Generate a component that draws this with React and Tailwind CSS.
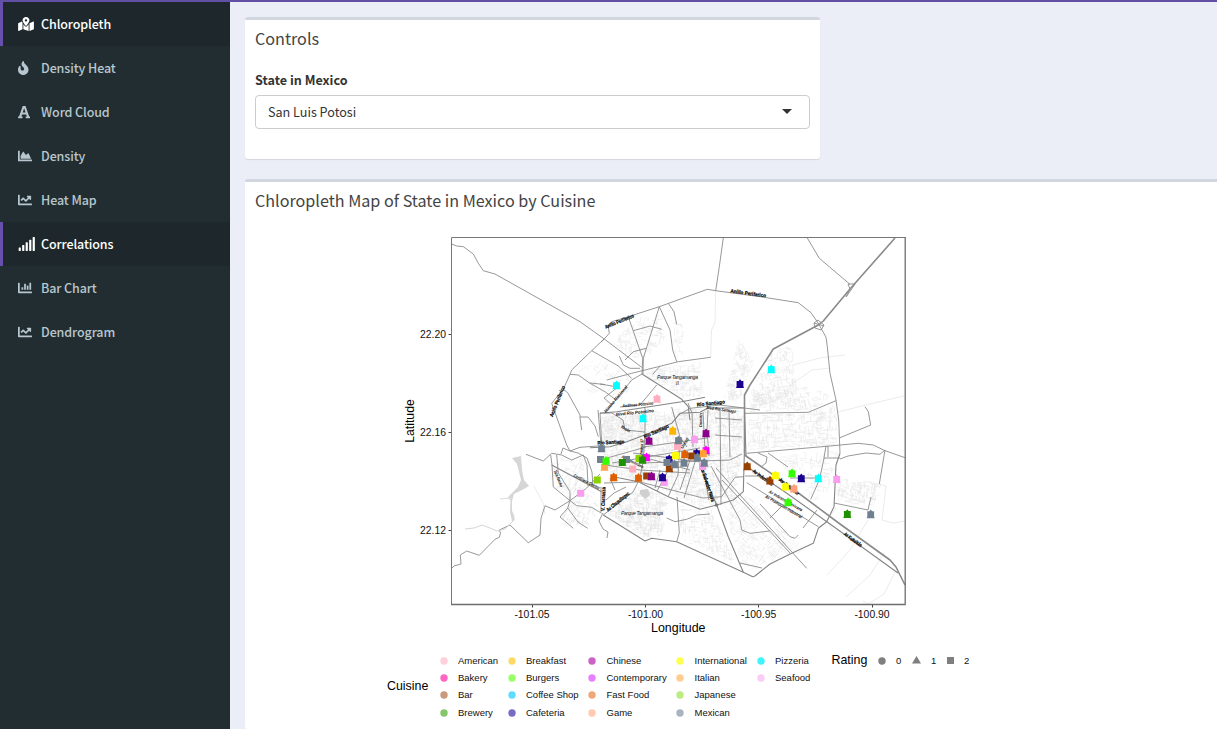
import React from "react";
import {
  FaMapMarkedAlt,
  FaFire,
  FaChartArea,
  FaChartLine,
  FaSignal,
  FaChartBar,
} from "react-icons/fa";

function SerifA({ className }) {
  return (
    <svg viewBox="0 0 448 512" className={className} fill="currentColor">
      <path d="M432 416h-23L278 42c-3-6-8-10-15-10h-78c-7 0-12 4-15 10L39 416H16c-9 0-16 7-16 16v32c0 9 7 16 16 16h136c9 0 16-7 16-16v-32c0-9-7-16-16-16h-27l23-70h152l23 70h-27c-9 0-16 7-16 16v32c0 9 7 16 16 16h136c9 0 16-7 16-16v-32c0-9-7-16-16-16zM172 276l52-158 52 158z" />
    </svg>
  );
}

const menu = [
  { label: "Chloropleth", Icon: FaMapMarkedAlt, size: "w-4 h-3.5", active: true },
  { label: "Density Heat", Icon: FaFire, size: "w-[10.5px] h-3.5" },
  { label: "Word Cloud", Icon: SerifA, size: "w-[12.25px] h-3.5" },
  { label: "Density", Icon: FaChartArea, size: "w-3.5 h-3.5" },
  { label: "Heat Map", Icon: FaChartLine, size: "w-3.5 h-3.5" },
  { label: "Correlations", Icon: FaSignal, size: "w-[17.5px] h-3.5", active: true },
  { label: "Bar Chart", Icon: FaChartBar, size: "w-3.5 h-3.5" },
  { label: "Dendrogram", Icon: FaChartLine, size: "w-3.5 h-3.5" },
];

function Sidebar() {
  return (
    <nav className="w-[230px] shrink-0 bg-[#222d32]">
      {menu.map(({ label, Icon, size, active }) => (
        <a
          key={label}
          className={
            active
              ? "flex h-11 items-center border-l-[3px] border-[#6650ac] bg-[#1e282c] pl-[15px] text-white"
              : "flex h-11 items-center border-l-[3px] border-transparent pl-[15px] text-[#b8c7ce]"
          }
        >
          <span className="flex w-[23px] items-center">
            <Icon className={size} />
          </span>
          <span className="text-[12.5px] font-medium leading-5 tracking-[-0.1px]">{label}</span>
        </a>
      ))}
    </nav>
  );
}

/* Deterministic short street segments scattered through a polygon. */
function streets(seed, poly, count, tilt) {
  let s = seed;
  const rnd = () => {
    s = (s * 16807) % 2147483647;
    return s / 2147483647;
  };
  const xs = poly.map((p) => p[0]);
  const ys = poly.map((p) => p[1]);
  const x0 = Math.min(...xs), x1 = Math.max(...xs);
  const y0 = Math.min(...ys), y1 = Math.max(...ys);
  const inside = (x, y) => {
    let r = false;
    for (let i = 0, j = poly.length - 1; i < poly.length; j = i++) {
      const [a, b] = poly[i];
      const [c, d] = poly[j];
      if (b > y !== d > y && x < ((c - a) * (y - b)) / (d - b) + a) r = !r;
    }
    return r;
  };
  let out = "";
  for (let i = 0; i < count; i++) {
    const x = x0 + rnd() * (x1 - x0);
    const y = y0 + rnd() * (y1 - y0);
    const a = ((tilt + (rnd() > 0.5 ? 90 : 0) + (rnd() - 0.5) * 8) * Math.PI) / 180;
    const l = 1.5 + rnd() * 5.5;
    const ex = x + Math.cos(a) * l;
    const ey = y + Math.sin(a) * l;
    if (inside(x, y) && inside(ex, ey))
      out += `M${x.toFixed(1)} ${y.toFixed(1)}L${ex.toFixed(1)} ${ey.toFixed(1)}`;
  }
  return out;
}

const districts = [
  streets(11, [[602, 415], [690, 408], [744, 410], [744, 455], [735, 500], [700, 508], [640, 482], [600, 470]], 2600, -8),
  streets(23, [[635, 318], [662, 312], [666, 340], [645, 360], [618, 362], [612, 342]], 260, 10),
  streets(31, [[592, 352], [618, 366], [640, 380], [606, 412], [598, 400], [575, 378]], 200, 35),
  streets(37, [[640, 375], [660, 366], [700, 362], [705, 396], [684, 400]], 420, 0),
  streets(41, [[740, 332], [746, 350], [755, 360], [744, 392], [738, 402], [722, 402], [730, 370]], 420, 70),
  streets(43, [[770, 352], [792, 345], [797, 390], [782, 402], [750, 410], [750, 388]], 360, 78),
  streets(47, [[747, 415], [808, 412], [836, 402], [838, 445], [748, 452]], 620, -4),
  streets(53, [[750, 395], [800, 385], [828, 392], [832, 402], [808, 411], [748, 412]], 300, -10),
  streets(59, [[768, 455], [838, 450], [836, 478], [815, 510], [798, 478]], 300, 5),
  streets(61, [[553, 458], [585, 458], [590, 485], [600, 494], [600, 510], [588, 528], [560, 525], [568, 498], [548, 482]], 420, 25),
  streets(67, [[606, 514], [640, 485], [670, 498], [662, 536], [645, 539]], 900, 0),
  streets(71, [[680, 505], [712, 508], [726, 538], [740, 568], [680, 540]], 420, 0),
  streets(73, [[720, 506], [744, 490], [806, 552], [770, 562], [755, 572], [742, 565]], 900, 45),
  streets(79, [[836, 478], [882, 482], [876, 506], [836, 502]], 260, 12),
  streets(83, [[672, 322], [684, 320], [682, 358], [674, 360]], 60, 0),
  streets(89, [[600, 415], [645, 410], [643, 445], [602, 445]], 180, 15),
];

const minor = [
  "715.7 290.7 715 323 711.5 330 710.7 357",
  "793 365 820 358 845 355",
  "838 412 870 404 904 396",
  "827 575 850 550 868 520",
  "846 597 870 575 884 553",
  "863 601 868 604 884 594 895 572",
  "836 508 827 520 833 531",
  "879 484 886 486 882 520 893 523 905 521",
  "534 486 543 503 545 514",
  "786 388 812 370 830 368",
];

const roads = [
  "451.7 244 456.7 246 463.3 246.7 473.3 254 478.3 263.3 483.3 270.7 495 274 580 321.7 604.3 339 641.7 367.3",
  "604 339 591.7 350.7 571.7 370 570 374.3 563.3 389.3 551.7 403.3 557.7 420 566.7 445 570 451",
  "563.3 389.3 567.7 392.7 580 415 580 418 581.7 430",
  "580 417 588 417 595 426 598.3 436.7",
  "591.7 350.7 605 358.3 618.3 366 631.7 378.3",
  "570 374.3 578.3 375 590 383.3 605 391.7 616 400",
  "590 383 605 384.5",
  "601.7 341.7 609.3 333.3 608.3 326.7 611.7 321.7 628.3 316.7 659.3 306.7 707.3 289.3 715.7 290.7 760 296.7 798.3 302.7 811 312.7 818.3 323.3 826 337.3 827.3 346.7 830 373.3 836 400 838.7 420 840 453.3",
  "723.3 238 719.3 266.7 715.7 290.7",
  "628.3 316.7 642.7 358.3 642 374",
  "659.3 306.7 643.3 358.3 643 374",
  "659.3 306.7 670 330 672.7 350 676.7 361.7",
  "668.3 303.3 674 311.7 676.7 324.3",
  "633.3 330.7 650 326 661.7 329.3",
  "606.7 380 631.7 373.3 658.3 366.7 678.3 361.7 710.7 357.3",
  "619.3 356 623.3 365 630 368.3 640 368.3",
  "625 360 633.3 351.7 646 348.3",
  "642 374 631.7 380 605 413.3",
  "660 366 653 374",
  "656.7 385 640 405 620 407",
  "600 384 618 387 604 398 612 405",
  "678.3 415 690 408.3 720 405 760 410",
  "807.3 238 819.3 258.3 850 284.3",
  "848 284 855 284 851 290 846 297 850 289 848 284",
  "814 323 818 320 824 325 821 330 815 328 814 323 824 326",
  "745 413.3 808.3 412.3 836 400.7",
  "865 406.7 868.3 411.7 870.7 425 840 437.7",
  "746.7 453.3 830 446 858.3 443.3 873.3 445 885 450.7 905 457.7",
  "840 459 848 456 866 453 880 454.3 885 450",
  "885 450 879.3 484",
  "826 446 823.3 461.7 819.3 480 810.7 499.3",
  "824 458 840 458", "828 446 828 457",
  "768 453 788 467", "758 453 767 457 766 463 761 467",
  "746.7 482.7 818.3 526.7",
  "716 468 740 495 806.7 568.3", "722 480 740 499 790 553",
  "760 504 790 536.7 795 538.3 798.3 535",
  "782 506 770 518", "817 510 803 528", "834 503 868 510 871 497",
  "740 563 762 568", "790 478 818 478", "745 476 758 476",
  "451.7 568.3 454 566 461 564 460.3 555 466.7 551 479.3 555.3 495 539.3 499.3 537.3 500.5 533 499.3 530 510 525 528.3 542.7 540 535 541 518.3 545 505.7 555 510 570 500.7 586.7 488 600 474",
  "526 454.3 543.3 461 551.7 453.3 561.7 455 571.7 460 583.3 455 587 465 588 486",
  "550.7 455 552 465 553.3 487 570 500.7",
  "556.7 455 558.3 473 570 491.7 570 500.7",
  "561 454 563 448 570 451 578 453 587 458 592 472 593 487",
  "570 451 580 447.3 598 446",
  "570 500.7 576.7 505.7 591.7 507.3 601.7 513.3",
  "570 500.7 567.7 508 560 517 573.3 528.3",
  "567.7 508 578 522 587.7 528.3",
  "603 513 599 521 603 529 608 532 607 538",
  "601 487 601 512", "598 410 601 445", "600 413 601.7 443",
  "600 413 612 413 623 420 625 430 645 432",
  "603.3 515 633 492 638.3 481.7",
  "606 500 614 493 626 487",
  "645 408 645 435 643 463 640 477",
  "671.7 407 680 437 687 447", "688 403 692 413 693 447", "703 412 705 450", "708 410 707 430 709 456",
  "643 447 707 438", "600 460 646 447", "612 463 700 448", "633 453 700 462", "605 465 640 470 690 473",
  "643 463 730 460 742 454", "680 437 678 475 668 497", "690 460 680 490", "695 462 684 498",
  "702 462 709 500", "671 465 657 491", "660 470 655 488", "650 459 690 470", "610 478 615 490", "604 483 638 482",
  "715 418 742 420", "715 435 742 437", "729 410 730 457", "720 408 721 505",
  "711 466 740 520 741.7 530 750 533.3 770 531",
  "677 497 677.3 501.7 679.3 533 676.7 541.7",
  "666.7 518 675 521.7 686.7 519.3 696.7 515 710 514",
  "640 482 703 498 721.7 496.7 735 477.3 744 476.7",
];

const main = [
  "603.3 515 645 541 651.7 538.3 676.7 541.7 743.3 572.3 752.7 576.7 755 576 770 564 791.7 553.3 813.3 543.3 818.3 528.3 826.7 521.7 834 506.7 836 465 840 453.3",
  "600 413.3 616.7 411.7 681.7 401.7 705 397.3",
  "642 374 681.7 399.3 688.3 406.7 690 420",
  "590 447.7 610 446.7 626.7 441.7 646.7 434.3 671.7 423.3 680 413.3 700 412.3 708 408 744 408",
  "551.7 465 601.7 491.7",
  "613.3 476.7 638.3 481.7 668.3 496.7 700 509.3 716.7 505 733.3 500 743.3 491.7 744.3 455",
  "716.7 505 728.3 536.7 743.3 572.3",
  "700 466.7 716.7 505",
  "746 466 785 492 830 524 898 573",
  "744.5 410 746 456",
];

const houses = [
  [616.5, 385.5, "#00ffff"], [657, 399, "#ffaebf"], [643, 418.5, "#00ffff"], [672.7, 431, "#ffb400"],
  [649, 441, "#8b008b"], [677.5, 446.5, "#ffaebf", 1], [678.5, 440.5, "#708090"], [694.5, 439.5, "#fa9cf0"],
  [706, 433.5, "#8b008b"], [601.5, 448.5, "#708090"], [604.5, 467, "#ffa54f"], [600.5, 459.5, "#708090", 1],
  [606, 461, "#33ff00"], [597.3, 480, "#8bd000", 1], [613.7, 477.5, "#e06000"], [638.5, 478, "#e06000"],
  [626.5, 459.5, "#708090", 1], [622.3, 462.5, "#1f9000", 1], [632.7, 469, "#ffaebf", 1], [639, 458.5, "#8bd000", 1],
  [646.5, 457.5, "#ff00ff"], [642.5, 460, "#1f9000"], [646.7, 476, "#984000", 1], [651.5, 476.5, "#8b008b"],
  [664.3, 482.5, "#fa9cf0", 1], [662.5, 477.5, "#1c0090"], [669.3, 459.5, "#1c0090"], [669.3, 468.5, "#984000"],
  [667, 462.5, "#708090", 1], [674.5, 464.5, "#708090"], [675.5, 455.5, "#ffff00"], [684, 463, "#708090"],
  [696.7, 453.5, "#1c0090"], [684.7, 454.5, "#e06000"], [691.7, 456, "#984000", 1], [697.5, 457.5, "#708090"],
  [702.5, 466.5, "#fa9cf0", 1], [706, 450.5, "#ff00ff"], [703.3, 453.5, "#ffa030"], [704.3, 463, "#708090"],
  [580.7, 493.3, "#fa9cf0", 1], [740, 384.3, "#1c0090"], [771.3, 369.5, "#00ffff"],
  [747.3, 466.5, "#984000"], [770, 480.8, "#984000"], [775.5, 475.5, "#ffff00"], [785.5, 486.8, "#ffff00"],
  [794, 488.7, "#ffa07a"], [792, 473.5, "#33ff00"], [801.3, 478.5, "#1c0090"], [818.3, 478.5, "#00ffff"],
  [836.7, 479.3, "#fa9cf0"], [788, 502.5, "#33ff00"], [847.3, 514.3, "#1f9000"], [870.7, 514.5, "#708090"],
];

const streetNames = [
  ["Anillo Periferico", 620, 323, -22, 31], ["Anillo Periferico", 748, 295, 8, 36],
  ["Anillo Periferico", 559, 402, -68, 33], ["Río Santiago", 611, 444, -3, 27],
  ["Río Santiago", 657, 433, -24, 27], ["Río Santiago", 711, 405, -6, 28],
  ["Av Kukulkán", 852, 541, 37, 21], ["Av Industrias", 762, 479, 35, 24],
  ["Av Salvador Nava", 706, 485, 72, 36], ["Av Chapultepec", 619, 503, -39, 28],
  ["V. Carranza", 605, 499, -88, 24],
  ["Av Salvador", 788, 488, 38, 24],
];
const thinNames = [
  ["Himno Nacional", 617, 400, -50, 34], ["Anáhuac Potosino", 638, 406, -5, 31],
  ["Blvd Río Potosino", 635, 414, -6, 38], ["Blvd Río Santiago", 721, 411, 8, 30],
  ["Cordillera Central", 586, 483, 27, 29], ["Tata Nacho", 557, 479, 68, 18],
  ["Morales", 625, 430, 30, 10], ["Damián", 702, 420, -90, 14],
  ["Av Venustiano", 632, 463, 27, 24], ["Carretera 57", 643, 449, -86, 20], ["Uresti", 686, 444, -58, 12],
  ["Av Industrial Mexicana", 785, 502, 30, 38], ["Av Promoción Industrial", 783, 508, 30, 42],
];

function MapChart() {
  return (
    <svg viewBox="400 230 512 410" className="h-[410px] w-[512px] shrink-0" fontFamily="'Liberation Sans', Arial, sans-serif">
      <g fill="none" strokeLinejoin="round">
        <path d={districts.join("")} stroke="#e2e2e2" strokeWidth="0.45" />
        {minor.map((p) => <polyline key={p} points={p} stroke="#dedede" strokeWidth="0.6" />)}
        {roads.map((p) => <polyline key={p} points={p} stroke="#858585" strokeWidth="0.85" />)}
        {main.map((p) => <polyline key={p} points={p} stroke="#858585" strokeWidth="1.1" />)}
        <polyline points="895 238 850 289 823.3 321 818.3 325 773.3 349 750 385 744.5 395 744.5 455" stroke="#8a8a8a" strokeWidth="1.6" />
        <polyline points="744.5 455 785 483 840 524 890 560 896 567 905 585" stroke="#8a8a8a" strokeWidth="1.6" />
        <polyline points="513 521 514 516 511 510 511 500 508 498 500 499" stroke="#dcdcdc" strokeWidth="1.2" />
        <polyline points="513 521 505 529 497 531 490 528 482 525 474 528 465 529" stroke="#d0d0d0" strokeWidth="0.9" />
      </g>
      <path d="M512 458 521 456 522 470 524 480 529 486 524 489 514 494 512 501 512 512 515 520 512 521 510 512 511 499 508 497 518 487 521 480 517 464Z" fill="#d6d6d6" />
      <path d="M640 490 648 489 650 495 645 499 640 494Z" fill="#cfcfcf" />
      <circle cx="716.5" cy="505" r="1.8" fill="#777" />
      <g fill="#000" stroke="#000" strokeWidth="0.2" fontSize="5.2" fontWeight="700" textAnchor="middle">
        {streetNames.map(([t, x, y, r, w], i) => (
          <text key={i} transform={`translate(${x} ${y}) rotate(${r})`} textLength={w} lengthAdjust="spacingAndGlyphs">{t}</text>
        ))}
      </g>
      <g fill="#111" fontSize="4.4" fontWeight="700" fontStyle="italic" textAnchor="middle">
        {thinNames.map(([t, x, y, r, w], i) => (
          <text key={i} transform={`translate(${x} ${y}) rotate(${r})`} textLength={w} lengthAdjust="spacingAndGlyphs">{t}</text>
        ))}
      </g>
      <g fill="#111" fontSize="5" fontStyle="italic">
        <text x="657" y="379" textLength="41">Parque Tangamanga</text>
        <text x="676" y="385">II</text>
        <text x="621" y="515" textLength="42">Parque Tangamanga</text>
      </g>
      {houses.map(([x, y, c, flat], i) =>
        flat ? (
          <rect key={i} x={x - 3.5} y={y - 3.5} width="7" height="7" fill={c} />
        ) : (
          <path key={i} d={`M${x - 3.4} ${y - 3.2}H${x - 1.4}L${x} ${y - 5}L${x + 1.4} ${y - 3.2}H${x + 3.4}V${y + 2}L${x + 4} ${y + 3.8}H${x - 4}L${x - 3.4} ${y + 2}Z`} fill={c} />
        )
      )}
      <path d="M451.5 604.5V237.5H905.5" fill="none" stroke="#777" />
      <path d="M905.2 237V604.5H451" fill="none" stroke="#6e6e6e" strokeWidth="1.3" />
      <path d="M448.5 334.5H451M448.5 432.5H451M448.5 530.5H451M532.5 605V607.5M645.5 605V607.5M758.5 605V607.5M872.5 605V607.5" stroke="#444" />
      <g fill="#111" fontSize="10.4" textAnchor="end">
        <text x="446" y="338">22.20</text>
        <text x="446" y="436">22.16</text>
        <text x="446" y="534">22.12</text>
      </g>
      <g fill="#111" fontSize="10.4" textAnchor="middle">
        <text x="532" y="618">-101.05</text>
        <text x="645.5" y="618">-101.00</text>
        <text x="758.7" y="618">-100.95</text>
        <text x="872" y="618">-100.90</text>
      </g>
      <text x="678.3" y="632" fontSize="12.4" textAnchor="middle" fill="#000">Longitude</text>
      <text transform="translate(414 421) rotate(-90)" fontSize="12.2" textAnchor="middle" fill="#000">Latitude</text>
    </svg>
  );
}

const cuisines = [
  ["American", "#ffd0da"], ["Bakery", "#ff66c4"], ["Bar", "#c69a7a"], ["Brewery", "#85c66c"],
  ["Breakfast", "#ffd966"], ["Burgers", "#99ff66"], ["Coffee Shop", "#5cdcff"], ["Cafeteria", "#776bc4"],
  ["Chinese", "#cb62c6"], ["Contemporary", "#e680ff"], ["Fast Food", "#efa878"], ["Game", "#ffc9b2"],
  ["International", "#ffff4d"], ["Italian", "#ffcc92"], ["Japanese", "#bdec82"], ["Mexican", "#a9b4c0"],
  ["Pizzeria", "#40f4fc"], ["Seafood", "#fbcdf6"],
];

function Dot({ color }) {
  return (
    <svg viewBox="0 0 8 8" className="h-2 w-2 shrink-0">
      <circle cx="4" cy="4" r="3.7" fill={color} />
    </svg>
  );
}

function Legend() {
  return (
    <div className="ml-[142px] mt-3 flex font-['Liberation_Sans',Arial,sans-serif] text-[9.5px] text-[#111]">
      <div className="mt-[25px] w-[52.5px] text-[12.4px] leading-[18px] text-black">Cuisine</div>
      <div className="grid grid-flow-col grid-cols-[68px_80.5px_88px_80.5px_75px] grid-rows-[repeat(4,17.4px)]">
        {cuisines.map(([name, color]) => (
          <div key={name} className="flex items-center gap-[10.5px] whitespace-nowrap">
            <Dot color={color} />
            <span>{name}</span>
          </div>
        ))}
      </div>
      <div className="flex h-[17.4px] items-center">
        <span className="w-[46.5px] text-[12.4px] text-black">Rating</span>
        <Dot color="#7f7f7f" />
        <span className="ml-2.5 w-[16px]">0</span>
        <svg viewBox="0 0 9 8" className="mt-[-1px] h-2 w-[9px]"><path d="M4.5 0 9 7.5H0Z" fill="#7f7f7f" /></svg>
        <span className="ml-2.5 w-[16px]">1</span>
        <svg viewBox="0 0 7 7" className="h-[7px] w-[7px]"><path d="M0 0H7V7H0Z" fill="#7f7f7f" /></svg>
        <span className="ml-2.5">2</span>
      </div>
    </div>
  );
}

export default function App() {
  return (
    <div className="flex h-[729px] w-[1217px] flex-col overflow-hidden border-t-2 border-[#6150a5] bg-[#ebeef7] font-['Noto_Sans_CJK_SC',sans-serif] text-[#333]">
      <div className="flex min-h-0 flex-1">
        <Sidebar />
        <main className="flex min-w-0 flex-1 flex-col pl-[15px] pt-[15px]">
          <section className="h-[142px] w-[575px] shrink-0 rounded-[3px] border-t-[3px] border-[#d2d6de] bg-white px-2.5 pt-[9px] shadow-[0_1px_1px_rgba(0,0,0,0.1)]">
            <h3 className="text-[16.15px] leading-[18px] text-[#444]">Controls</h3>
            <div className="mt-[23px] text-[12.6px] font-bold leading-5">State in Mexico</div>
            <div className="mt-[5px] flex h-[34px] items-center justify-between rounded border border-[#ccc] pl-3 pr-[17px] text-[12.6px]">
              <span>San Luis Potosi</span>
              <svg viewBox="0 0 10 5" className="mt-[-1px] h-[5px] w-[10px]"><path d="M0 0H10L5 5Z" fill="#333" /></svg>
            </div>
          </section>
          <section className="mt-5 w-[1160px] flex-1 rounded-[3px] border-t-[3px] border-[#d2d6de] bg-white">
            <h3 className="px-2.5 pt-[9px] text-[16.15px] leading-[18px] text-[#444]">Chloropleth Map of State in Mexico by Cuisine</h3>
            <div className="ml-[155px] mt-[21px] flex">
              <MapChart />
            </div>
            <Legend />
          </section>
        </main>
      </div>
    </div>
  );
}
